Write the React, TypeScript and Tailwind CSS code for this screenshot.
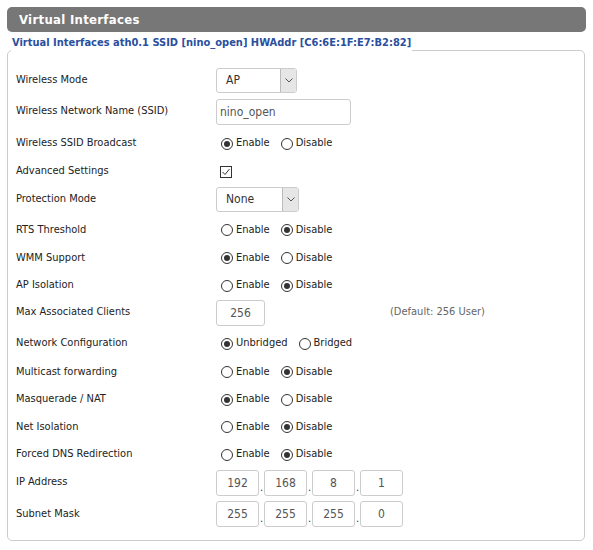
import React from 'react';

type Opt = { label: string; checked: boolean };

function Radio({ label, checked }: Opt) {
  return (
    <label className="flex items-center mr-[11px]">
      <span className="w-[12px] h-[12px] rounded-full border border-[#333] bg-white flex items-center justify-center">
        {checked && <span className="w-[6px] h-[6px] rounded-full bg-[#333]" />}
      </span>
      <span className="ml-[3px] text-[#222]">{label}</span>
    </label>
  );
}

function Select({ value, width }: { value: string; width: string }) {
  return (
    <div className={`${width} h-[25px] flex border border-[#ccc] rounded-[3px] bg-white`}>
      <span className="flex-1 pl-[9px] flex items-center text-[12px] text-[#333]">{value}</span>
      <span className="w-[16px] bg-[#e6e6e6] border-l border-[#bbb] flex items-center justify-center">
        <svg width="8" height="5" viewBox="0 0 8 5">
          <path d="M0.5 0.5 L4 4 L7.5 0.5" fill="none" stroke="#555" strokeWidth="1" />
        </svg>
      </span>
    </div>
  );
}

function Box({ value, className }: { value: string; className: string }) {
  return (
    <div className={`${className} h-[26px] border border-[#ccc] rounded-[3px] bg-white flex items-center text-[12px] text-[#555]`}>
      {value}
    </div>
  );
}

function Row({ label, h, pad = '', children }: { label: string; h: string; pad?: string; children: React.ReactNode }) {
  return (
    <div className={`flex items-center ${h} ${pad}`}>
      <div className="w-[200px] text-[#222]">{label}</div>
      <div className="flex items-center">{children}</div>
    </div>
  );
}

function IpRow({ parts }: { parts: string[] }) {
  return (
    <div className="flex items-center">
      {parts.map((p, i) => (
        <React.Fragment key={i}>
          {i > 0 && <span className="w-[5px] text-center text-[#333] self-end mb-[3px] leading-none">.</span>}
          <Box value={p} className="w-[43px] justify-center" />
        </React.Fragment>
      ))}
    </div>
  );
}

function EnDis({ on }: { on: boolean }) {
  return (
    <span className="ml-[5px] flex items-center">
      <Radio label="Enable" checked={on} />
      <Radio label="Disable" checked={!on} />
    </span>
  );
}

export default function App() {
  return (
    <div className="w-[593px] h-[550px] bg-white p-[7px] text-[11px] font-['DejaVu_Sans_Condensed','DejaVu_Sans',sans-serif]">
      <div className="h-[25px] bg-[#777777] rounded-[5px] flex items-center pl-[12px] text-white font-bold text-[13px] tracking-[0.3px]">
        Virtual Interfaces
      </div>

      <fieldset className="mt-[4px] w-[578px] border border-[#cccccc] rounded-[5px] pl-[8px] pb-[10px]">
        <legend className="-ml-[5px] px-[1px] pb-[14px] leading-[14px] font-bold text-[11px] text-[#2a4f9e]">
          Virtual Interfaces ath0.1 SSID [nino_open] HWAddr [C6:6E:1F:E7:B2:82]
        </legend>

        <Row label="Wireless Mode" h="h-[32px]">
          <Select value="AP" width="w-[81px]" />
        </Row>
        <Row label="Wireless Network Name (SSID)" h="h-[31px]">
          <Box value="nino_open" className="w-[135px] pl-[3px]" />
        </Row>
        <Row label="Wireless SSID Broadcast" h="h-[30px]" pad="pt-[3px]">
          <EnDis on={true} />
        </Row>
        <Row label="Advanced Settings" h="h-[27px]" pad="pt-[2px]">
          <span className="ml-[4px] w-[12px] h-[12px] border border-[#333] bg-white flex items-center justify-center">
            <svg width="10" height="10" viewBox="0 0 10 10">
              <path d="M1.5 5 L4 7.5 L8.5 2" fill="none" stroke="#333" strokeWidth="1" />
            </svg>
          </span>
        </Row>
        <Row label="Protection Mode" h="h-[30px]">
          <Select value="None" width="w-[83px]" />
        </Row>
        <Row label="RTS Threshold" h="h-[29px]" pad="pt-[3px]">
          <EnDis on={false} />
        </Row>
        <Row label="WMM Support" h="h-[27px]" pad="pt-[3px]">
          <EnDis on={true} />
        </Row>
        <Row label="AP Isolation" h="h-[28px]" pad="pt-[3px]">
          <EnDis on={false} />
        </Row>
        <Row label="Max Associated Clients" h="h-[29px]">
          <Box value="256" className="w-[49px] justify-center" />
          <span className="ml-[125px] text-[#666]">(Default: 256 User)</span>
        </Row>
        <Row label="Network Configuration" h="h-[30px]" pad="pt-[3px]">
          <span className="ml-[5px] flex items-center">
            <Radio label="Unbridged" checked={true} />
            <Radio label="Bridged" checked={false} />
          </span>
        </Row>
        <Row label="Multicast forwarding" h="h-[27px]" pad="pt-[3px]">
          <EnDis on={false} />
        </Row>
        <Row label="Masquerade / NAT" h="h-[28px]" pad="pt-[3px]">
          <EnDis on={true} />
        </Row>
        <Row label="Net Isolation" h="h-[27px]" pad="pt-[3px]">
          <EnDis on={false} />
        </Row>
        <Row label="Forced DNS Redirection" h="h-[28px]" pad="pt-[3px]">
          <EnDis on={false} />
        </Row>
        <Row label="IP Address" h="h-[31px]">
          <IpRow parts={['192', '168', '8', '1']} />
        </Row>
        <Row label="Subnet Mask" h="h-[32px]">
          <IpRow parts={['255', '255', '255', '0']} />
        </Row>
      </fieldset>
    </div>
  );
}
